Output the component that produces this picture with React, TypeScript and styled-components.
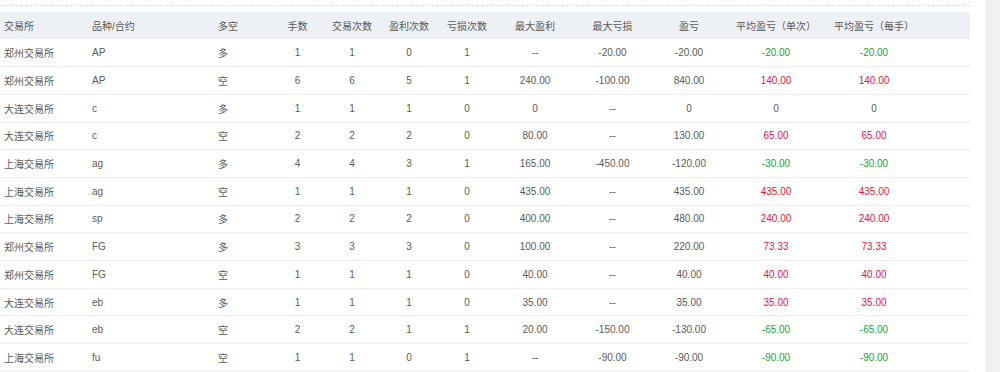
import React from "react";
import styled, { createGlobalStyle } from "styled-components";

const GlobalStyle = createGlobalStyle`
  html, body {
    margin: 0;
    padding: 0;
    background: #fff;
    font-family: "Liberation Sans", "Noto Sans CJK SC", Arial, sans-serif;
  }
`;

const Page = styled.div`
  display: flex;
  width: 1000px;
  height: 372px;
  overflow: hidden;
`;

const Panel = styled.div`
  width: 970px;
  padding-top: 5px;
`;

const Track = styled.div`
  margin-left: 15px;
  width: 15px;
  background: #f1f1f1;
`;

const Divider = styled.div`
  border-top: 1px dashed #dcdcdc;
  margin-bottom: 6px;
`;

const Table = styled.table`
  width: 970px;
  table-layout: fixed;
  border-collapse: collapse;
  font-size: 10px;
  color: #5a5a5a;
`;

const Head = styled.th<{ $left?: boolean; $pr?: number }>`
  height: 27px;
  padding: 0 ${(p) => p.$pr ?? 0}px 0 ${(p) => (p.$left ? 4 : 0)}px;
  background: #edf0f5;
  font-weight: normal;
  color: #5a5a5a;
  white-space: nowrap;
  text-align: ${(p) => (p.$left ? "left" : "center")};
`;

const Row = styled.tr`
  height: 27.7px;
  border-bottom: 1px solid #ececec;
`;

const Cell = styled.td<{ $left?: boolean; $tone?: "up" | "down"; $pr?: number }>`
  padding: 0 ${(p) => p.$pr ?? 0}px 0 ${(p) => (p.$left ? 4 : 0)}px;
  white-space: nowrap;
  text-align: ${(p) => (p.$left ? "left" : "center")};
  color: ${(p) => (p.$tone === "up" ? "#e2163c" : p.$tone === "down" ? "#22a12a" : "#5a5a5a")};
`;

const widths = [88, 126, 58, 51, 58, 56, 60, 76, 79, 74, 100, 144];

const headers = [
  "交易所",
  "品种/合约",
  "多空",
  "手数",
  "交易次数",
  "盈利次数",
  "亏损次数",
  "最大盈利",
  "最大亏损",
  "盈亏",
  "平均盈亏（单次）",
  "平均盈亏（每手）",
];

type Trade = [string, string, string, number, number, number, number, string, string, string, string, string];

const rows: Trade[] = [
  ["郑州交易所", "AP", "多", 1, 1, 0, 1, "--", "-20.00", "-20.00", "-20.00", "-20.00"],
  ["郑州交易所", "AP", "空", 6, 6, 5, 1, "240.00", "-100.00", "840.00", "140.00", "140.00"],
  ["大连交易所", "c", "多", 1, 1, 1, 0, "0", "--", "0", "0", "0"],
  ["大连交易所", "c", "空", 2, 2, 2, 0, "80.00", "--", "130.00", "65.00", "65.00"],
  ["上海交易所", "ag", "多", 4, 4, 3, 1, "165.00", "-450.00", "-120.00", "-30.00", "-30.00"],
  ["上海交易所", "ag", "空", 1, 1, 1, 0, "435.00", "--", "435.00", "435.00", "435.00"],
  ["上海交易所", "sp", "多", 2, 2, 2, 0, "400.00", "--", "480.00", "240.00", "240.00"],
  ["郑州交易所", "FG", "多", 3, 3, 3, 0, "100.00", "--", "220.00", "73.33", "73.33"],
  ["郑州交易所", "FG", "空", 1, 1, 1, 0, "40.00", "--", "40.00", "40.00", "40.00"],
  ["大连交易所", "eb", "多", 1, 1, 1, 0, "35.00", "--", "35.00", "35.00", "35.00"],
  ["大连交易所", "eb", "空", 2, 2, 1, 1, "20.00", "-150.00", "-130.00", "-65.00", "-65.00"],
  ["上海交易所", "fu", "空", 1, 1, 0, 1, "--", "-90.00", "-90.00", "-90.00", "-90.00"],
];

const tone = (v: string) => {
  const n = parseFloat(v);
  if (isNaN(n) || n === 0) return undefined;
  return n > 0 ? "up" : "down";
};

export default function App() {
  return (
    <Page>
      <GlobalStyle />
      <Panel>
        <Divider />
        <Table>
          <colgroup>
            {widths.map((w, i) => (
              <col key={i} style={{ width: w }} />
            ))}
          </colgroup>
          <thead>
            <tr>
              {headers.map((h, i) => (
                <Head key={h} $left={i < 3} $pr={i === 11 ? 48 : 0}>
                  {h}
                </Head>
              ))}
            </tr>
          </thead>
          <tbody>
            {rows.map((r, ri) => (
              <Row key={ri}>
                {r.map((v, i) => (
                  <Cell
                    key={i}
                    $left={i < 3}
                    $pr={i === 11 ? 48 : 0}
                    $tone={i >= 10 ? tone(String(v)) : undefined}
                  >
                    {v}
                  </Cell>
                ))}
              </Row>
            ))}
          </tbody>
        </Table>
      </Panel>
      <Track />
    </Page>
  );
}
